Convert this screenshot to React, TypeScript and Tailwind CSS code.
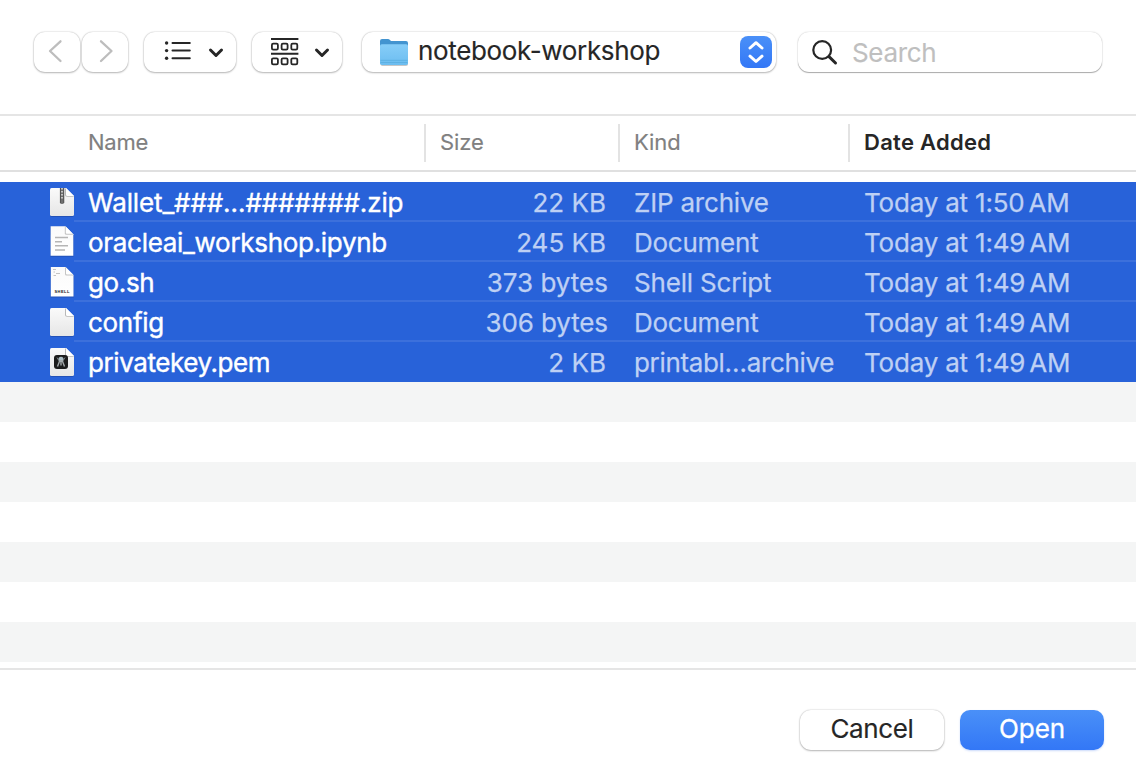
import type { ReactNode } from 'react';

type FileKind = 'zip' | 'text' | 'shell' | 'blank' | 'key';

interface FileEntry {
  icon: FileKind;
  name: string;
  nameClass: string;
  size: string;
  sizeClass: string;
  kind: string;
  kindClass: string;
  date: [string, string];
}

const files: FileEntry[] = [
  { icon: 'zip', name: 'Wallet_###…#######.zip', nameClass: 'tracking-[-0.13px]', size: '22 KB', sizeClass: 'pr-[12px]', kind: 'ZIP archive', kindClass: 'tracking-[-0.2px]', date: ['Today at 1:50', 'AM'] },
  { icon: 'text', name: 'oracleai_workshop.ipynb', nameClass: 'tracking-[-0.3px]', size: '245 KB', sizeClass: 'pr-[12px]', kind: 'Document', kindClass: 'tracking-[-0.25px]', date: ['Today at 1:49', 'AM'] },
  { icon: 'shell', name: 'go.sh', nameClass: 'tracking-[-0.35px]', size: '373 bytes', sizeClass: 'pr-[10px]', kind: 'Shell Script', kindClass: 'tracking-[-0.18px]', date: ['Today at 1:49', 'AM'] },
  { icon: 'blank', name: 'config', nameClass: 'tracking-[-0.3px]', size: '306 bytes', sizeClass: 'pr-[10px] tracking-[-0.1px]', kind: 'Document', kindClass: 'tracking-[-0.25px]', date: ['Today at 1:49', 'AM'] },
  { icon: 'key', name: 'privatekey.pem', nameClass: 'tracking-[-0.42px]', size: '2 KB', sizeClass: 'pr-[12px]', kind: 'printabl…archive', kindClass: 'tracking-[-0.33px]', date: ['Today at 1:49', 'AM'] },
];

const stripes = [0, 1, 2, 3, 4, 5, 6];

function FileIcon({ kind }: { kind: FileKind }) {
  const tall = kind === 'text' || kind === 'shell';
  return (
    <svg width="28" height="36" viewBox="0 0 28 36" className="shrink-0 overflow-visible" aria-hidden="true">
      <defs>
        <linearGradient id={`paper-${kind}`} x1="0" y1="0" x2="0" y2="1">
          <stop offset="0" stopColor="#fafafa" />
          <stop offset="1" stopColor={tall ? '#ffffff' : '#e6e6e6'} />
        </linearGradient>
      </defs>
      {tall ? (
        <g transform={kind === 'text' ? 'translate(-.2 -.8)' : undefined}>
          <path d="M3 4H18L26 12V34H3Z" fill="#1b3f91" opacity=".45" transform="translate(-.3 -.4)" />
          <path d="M2.8 3H17.5L25.5 11V32.6H2.8Z" fill={`url(#paper-${kind})`} />
          <path d="M17 3L25.5 11.5H18.5Q17 11.5 17 10Z" fill="#c4c4c4" />
          <path d="M18 3.4L25 10.5H19Q18 10.5 18 9.5Z" fill="#fff" />
        </g>
      ) : (
        <>
          <path d="M4 5H18L26 13V31Q26 33 24 33H4Q2 33 2 31V7Q2 5 4 5Z" fill="#1b3f91" opacity=".45" />
          <path d="M3.5 4H18L26 12V30.5Q26 32 24.5 32H3.5Q2 32 2 30.5V5.5Q2 4 3.5 4Z" fill={`url(#paper-${kind})`} />
          <path d="M17 4L26 12.8H19Q17 12.8 17 11Z" fill="#b8b8b8" />
          <path d="M18 4L26 12H19.5Q18 12 18 10.5Z" fill="#fff" />
        </>
      )}
      {kind === 'zip' && (
        <>
          <path d="M12 4H16V18.5Q16 20 14 20T12 18.5Z" fill="#6f6f6f" />
          <path d="M14 4V16" stroke="#c4c4c4" strokeWidth="2" strokeDasharray="1.5 1.5" />
          <path d="M12.4 4V19M15.8 4V19" stroke="#4a4a4a" strokeWidth=".8" />
        </>
      )}
      {kind === 'text' && (
        <path d="M7 13.5H20M7 17.7H14M7 21.8H20M7 26H17" stroke="#b5b5b5" strokeWidth="1.5" />
      )}
      {kind === 'shell' && (
        <>
          <path d="M5 5.5H8M5.5 8H7M8 9.5H12M5.5 11.5H8" stroke="#c4c4c4" strokeWidth="1" />
          <text x="14.2" y="28.7" textAnchor="middle" fontFamily="Liberation Sans, sans-serif" fontSize="4" fontWeight="700" letterSpacing=".5" fill="#222">SHELL</text>
        </>
      )}
      {kind === 'key' && (
        <>
          <rect x="6" y="11" width="14" height="14" rx="3" fill="#1c1c1c" />
          <circle cx="13" cy="15.4" r="2.6" fill="#a9bcc4" />
          <path d="M12 16L9.5 22.5M13 16V21.5M14 16L16.5 22.5" stroke="#a3a8aa" strokeWidth="1.4" />
          <path d="M10.5 16L9 13.5M15.5 16L17 13.5" stroke="#7d8487" strokeWidth="1" />
        </>
      )}
    </svg>
  );
}

function Control({ className, children, label }: { className: string; children: ReactNode; label?: string }) {
  return (
    <button
      type="button"
      aria-label={label}
      className={`flex h-10 shrink-0 items-center rounded-[11px] bg-white shadow-[0_0_1.5px_rgba(0,0,0,0.3),0_1px_2px_rgba(0,0,0,0.24)] ${className}`}
    >
      {children}
    </button>
  );
}

function Caret() {
  return (
    <svg width="16" height="12" viewBox="0 0 16 12" fill="none" aria-hidden="true">
      <path d="M2.5 3L8 8.5L13.5 3" stroke="#262626" strokeWidth="3" strokeLinecap="round" strokeLinejoin="round" />
    </svg>
  );
}

function Toolbar() {
  return (
    <div className="flex h-[114px] shrink-0 items-start pt-8 pl-[34px]">
      <Control className="w-[46px] pl-[13px]" label="Back">
        <svg width="18" height="26" viewBox="0 0 18 26" fill="none">
          <path d="M13.5 2.3L3 12L13.5 22" stroke="#bdbdbd" strokeWidth="2.3" strokeLinecap="round" strokeLinejoin="round" />
        </svg>
      </Control>
      <Control className="ml-[2px] w-[46px] pl-[15px]" label="Forward">
        <svg width="18" height="26" viewBox="0 0 18 26" fill="none">
          <path d="M4 2.3L14.5 12L4 22" stroke="#bdbdbd" strokeWidth="2.3" strokeLinecap="round" strokeLinejoin="round" />
        </svg>
      </Control>
      <Control className="ml-4 w-[92px] pl-5" label="List view">
        <svg width="28" height="22" viewBox="0 0 28 22" fill="none">
          <path d="M8.5 2H25.8M8.5 9.6H25.8M8.5 17.3H25.8" stroke="#262626" strokeWidth="2" strokeLinecap="round" />
          <g fill="#262626">
            <circle cx="2.6" cy="2" r="1.7" />
            <circle cx="2.6" cy="9.6" r="1.7" />
            <circle cx="2.6" cy="17.3" r="1.7" />
          </g>
        </svg>
        <span className="ml-4 pt-px"><Caret /></span>
      </Control>
      <Control className="ml-4 w-[90px] pl-[18px]" label="Group by">
        <svg width="30" height="30" viewBox="0 0 30 30" fill="none" stroke="#262626">
          <path d="M1 2H28.4M1 16.8H28.4" strokeWidth="2" />
          <g strokeWidth="1.8">
            <rect x="1.9" y="6.6" width="6" height="6" rx="1.3" />
            <rect x="11.6" y="6.6" width="6" height="6" rx="1.3" />
            <rect x="21.3" y="6.6" width="6" height="6" rx="1.3" />
            <rect x="1.9" y="21.3" width="6" height="6" rx="1.3" />
            <rect x="11.6" y="21.3" width="6" height="6" rx="1.3" />
            <rect x="21.3" y="21.3" width="6" height="6" rx="1.3" />
          </g>
        </svg>
        <span className="ml-[14px] pt-px"><Caret /></span>
      </Control>
      <Control className="ml-5 w-[414px] pr-1 pl-4">
        <svg width="32" height="32" viewBox="0 0 32 32" aria-hidden="true">
          <defs>
            <linearGradient id="folder-front" x1="0" y1="0" x2="0" y2="1">
              <stop offset="0" stopColor="#86cdf8" />
              <stop offset="1" stopColor="#6cbdf0" />
            </linearGradient>
          </defs>
          <rect x="2.5" y="10" width="27.5" height="20" rx="2" fill="#000" opacity=".22" />
          <path d="M2 5Q2 3 4 3H10Q11 3 12 4L13 5H28Q30 5 30 7V14H2Z" fill="#4394d0" />
          <rect x="2" y="8.3" width="28" height="20.7" rx="1.8" fill="url(#folder-front)" />
          <path d="M2.5 24.3H29.5M2.5 26.5H29.5" stroke="#59addf" strokeWidth=".8" />
        </svg>
        <span className="ml-2 -translate-y-px text-[26px] leading-8 tracking-[-0.35px] whitespace-nowrap text-[#262626] [-webkit-text-stroke:0.15px]">notebook-workshop</span>
        <span className="ml-auto flex size-8 items-center justify-center rounded-[8px] bg-linear-to-b from-[#4a90f8] to-[#3377f6]">
          <svg width="18" height="26" viewBox="0 0 18 26" fill="none" stroke="#fff" strokeWidth="3" strokeLinecap="round" strokeLinejoin="round">
            <path d="M3 9L9 3.7L15 9M3 17.2L9 22.5L15 17.2" />
          </svg>
        </span>
      </Control>
      <label className="ml-[22px] flex h-10 w-[304px] items-center rounded-[11px] bg-white pl-3 shadow-[0_0_1.5px_rgba(0,0,0,0.25),0_1px_1px_rgba(0,0,0,0.3)]">
        <svg width="30" height="30" viewBox="0 0 30 30" fill="none" stroke="#262626">
          <circle cx="12.2" cy="13" r="8.9" strokeWidth="2.2" />
          <path d="M19 19.7L25.5 26" strokeWidth="3" strokeLinecap="round" />
        </svg>
        <input
          aria-label="Search"
          placeholder="Search"
          className="ml-3 w-[230px] bg-transparent pt-[2px] text-[26px] leading-8 tracking-[-0.35px] outline-none [-webkit-text-stroke:0.15px] placeholder:text-[#bfbfbf]"
        />
      </label>
    </div>
  );
}

function HeaderRow() {
  return (
    <div className="flex h-[58px] shrink-0 items-center border-t-2 border-b-2 border-t-[#e5e5e5] border-b-[#e0e0e0] text-[22px] leading-[36px] text-[#808080] [-webkit-text-stroke:0.15px]">
      <div className="h-[38px] w-[426px] border-r-2 border-[#e3e3e3] pl-[88px] tracking-[-0.25px]">Name</div>
      <div className="h-[38px] w-[194px] border-r-2 border-[#e3e3e3] pl-[14px] tracking-[-0.1px]">Size</div>
      <div className="h-[38px] w-[230px] border-r-2 border-[#e3e3e3] pl-[14px] tracking-[-0.1px]">Kind</div>
      <div className="h-[38px] flex-1 pl-[14px] font-semibold tracking-[0.28px] text-[#262626] [-webkit-text-stroke:0]">Date Added</div>
    </div>
  );
}

function FileRow({ file, last }: { file: FileEntry; last: boolean }) {
  return (
    <div className="flex h-10 bg-[#2862d9] pl-12 text-[26px] text-[#bed0f4]">
      <div className="w-[26px] pt-[2px]">
        <FileIcon kind={file.icon} />
      </div>
      <div className={`flex h-10 flex-1 border-b-2 leading-[42px] whitespace-nowrap [-webkit-text-stroke:0.25px] ${last ? 'border-transparent' : 'border-[#3c70dc]'}`}>
        <div className={`w-[352px] pl-[14px] text-white [-webkit-text-stroke:0.4px] ${file.nameClass}`}>{file.name}</div>
        <div className={`w-[192px] text-right ${file.sizeClass}`}>{file.size}</div>
        <div className={`w-[230px] pl-[16px] ${file.kindClass}`}>{file.kind}</div>
        <div className="flex gap-1 pl-[16px] tracking-[-0.2px]">
          <span>{file.date[0]}</span>
          <span>{file.date[1]}</span>
        </div>
      </div>
    </div>
  );
}

export default function App() {
  return (
    <main className="flex h-[760px] w-[1136px] flex-col overflow-hidden bg-white font-[Inter,'Liberation_Sans',sans-serif] antialiased">
      <Toolbar />
      <HeaderRow />
      <section className="flex h-[496px] shrink-0 flex-col pt-[10px]">
        {files.map((file, index) => (
          <FileRow key={file.name} file={file} last={index === files.length - 1} />
        ))}
        {stripes.map((stripe) => (
          <div key={stripe} className={`h-10 shrink-0 ${stripe % 2 === 0 ? 'bg-[#f4f5f5]' : 'bg-white'}`} />
        ))}
      </section>
      <footer className="flex flex-1 items-start justify-end gap-4 border-t-2 border-[#e5e5e5] pt-10 pr-8 text-[26px] leading-8 [-webkit-text-stroke:0.15px]">
        <Control className="w-36 justify-center pb-[2px] tracking-[-0.35px] text-[#262626]">Cancel</Control>
        <button type="button" className="flex h-10 w-36 items-center justify-center rounded-[10px] bg-linear-to-b from-[#4a90f8] to-[#3377f6] pb-[2px] tracking-[-0.1px] text-white shadow-[0_1px_2px_rgba(50,110,240,0.25)] [-webkit-text-stroke:0.3px]">
          Open
        </button>
      </footer>
    </main>
  );
}
